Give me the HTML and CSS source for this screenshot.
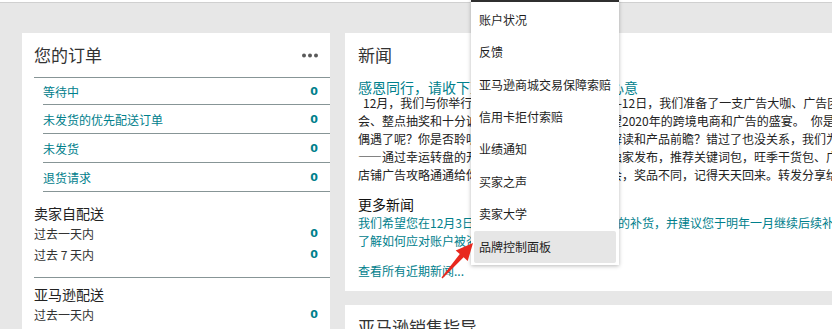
FILE: index.html
```html
<!DOCTYPE html>
<html lang="zh-CN">
<head>
<meta charset="utf-8">
<title>卖家平台</title>
<link rel="stylesheet" href="styles.css">
</head>
<body>
<div class="page">
  <div class="layout">
    <section class="card orders">
      <div class="card-head">
        <h2 class="card-title">您的订单</h2>
        <svg class="more" width="16" height="5" viewBox="0 0 16 5" aria-hidden="true"><circle cx="2" cy="2.5" r="2"/><circle cx="8" cy="2.5" r="2"/><circle cx="14" cy="2.5" r="2"/></svg>
      </div>
      <ul class="order-list">
        <li class="order-row"><a class="link">等待中</a><span class="count">0</span></li>
        <li class="order-row"><a class="link">未发货的优先配送订单</a><span class="count">0</span></li>
        <li class="order-row"><a class="link">未发货</a><span class="count">0</span></li>
        <li class="order-row"><a class="link">退货请求</a><span class="count">0</span></li>
      </ul>
      <div class="group group-first">
        <h3 class="group-title">卖家自配送</h3>
        <div class="stat-row"><span>过去一天内</span><span class="count">0</span></div>
        <div class="stat-row"><span>过去 7 天内</span><span class="count">0</span></div>
      </div>
      <div class="group group-next">
        <h3 class="group-title">亚马逊配送</h3>
        <div class="stat-row"><span>过去一天内</span><span class="count">0</span></div>
        <div class="stat-row"><span>过去 7 天内</span><span class="count">0</span></div>
      </div>
    </section>
    <div class="main-col">
      <section class="card news">
        <div class="card-head">
          <h2 class="card-title">新闻</h2>
        </div>
        <a class="link headline">感恩同行，请收下亚马逊广告给您的这份心意</a>
        <p class="news-body">12月，我们与你举行了亚马逊广告年度盛会，11-12日，我们准备了一支广告大咖、广告团队的豪华阵容<br>会、整点抽奖和十分诚意的礼品，让我们一起展望2020年的跨境电商和广告的盛宴。　你是否与他们<br>偶遇了呢？你是否聆听了大咖的广告策略分享、解读和产品前瞻？错过了也没关系，我们为你准备了<br>——通过幸运转盘的开奖，你解锁了亚马逊广告独家发布，推荐关键词包，旺季干货包、广告手册<br>店铺广告攻略通通给你。每天登录都会有抽奖机会，奖品不同，记得天天回来。转发分享给好友</p>
        <h3 class="more-title">更多新闻</h3>
        <a class="link news-link">我们希望您在12月3日之前完成年末旺季热销商品的补货，并建议您于明年一月继续后续补货</a>
        <a class="link news-link">了解如何应对账户被盗用的风险</a>
        <a class="link all-news">查看所有近期新闻...</a>
      </section>
      <section class="card guide">
        <div class="card-head">
          <h2 class="card-title">亚马逊销售指导</h2>
        </div>
      </section>
    </div>
  </div>
</div>

<ul class="dropdown">
  <li class="menu-item">账户状况</li>
  <li class="menu-item">反馈</li>
  <li class="menu-item">亚马逊商城交易保障索赔</li>
  <li class="menu-item">信用卡拒付索赔</li>
  <li class="menu-item">业绩通知</li>
  <li class="menu-item">买家之声</li>
  <li class="menu-item">卖家大学</li>
  <li class="menu-item menu-item-active">品牌控制面板</li>
</ul>

<svg class="arrow" width="50" height="50" viewBox="0 0 50 50" aria-hidden="true">
  <polygon points="11.5,42.5 29.8,19 25.7,15.4 43,8 37.7,26 33.6,22.3 12.5,43.5" fill="#e8281e"/>
</svg>
</body>
</html>
```
FILE: styles.css
```css
* { box-sizing: border-box; }
html, body { margin: 0; padding: 0; }
body {
  background: #fff;
  font-family: "Noto Sans CJK SC", "Liberation Sans", sans-serif;
  font-size: 12px;
  color: #222;
  position: relative;
  width: 840px;
  height: 329px;
  overflow: hidden;
}
h2, h3, p, ul { margin: 0; padding: 0; font-weight: normal; }
ul { list-style: none; }

.page {
  margin-top: 2px;
  border-top: 1px solid #d0d0d0;
  width: 832px;
  height: 327px;
  background: #e7e7e7;
  overflow: hidden;
}
.layout {
  display: grid;
  grid-template-columns: 308px 620px;
  column-gap: 15px;
  padding: 30px 0 0 22px;
  align-items: start;
}
.card { background: #fff; }
.card-head {
  display: flex;
  align-items: center;
  justify-content: space-between;
  padding-top: 10px;
  height: 34px;
}
.card-title {
  font-size: 17px;
  line-height: 24px;
  color: #333;
}
.more { fill: #5a5a5a; margin-right: 12px; }

.orders { padding-left: 12px; height: 400px; }
.orders .card-head { margin-bottom: 10px; }
.order-list { border-top: 1px solid #879596; }
.order-row {
  margin-left: 9px;
  height: 29px;
  padding-right: 12px;
  border-bottom: 1px solid #879596;
  display: flex;
  align-items: center;
  justify-content: space-between;
}
.order-row:first-child { height: 27px; }
.link { color: #00808c; text-decoration: none; }
.count {
  font-family: "DejaVu Sans", sans-serif;
  font-weight: bold;
  font-size: 11px;
  color: #00808c;
}
.group { border-bottom: 1px solid #879596; padding-bottom: 12px; }
.group-first { margin-top: 11px; }
.group-next { margin-top: 6px; }
.group-title { font-size: 14px; line-height: 20px; color: #222; }
.stat-row {
  height: 21px;
  padding-right: 12px;
  display: flex;
  align-items: center;
  justify-content: space-between;
  color: #333;
}

.main-col { display: flex; flex-direction: column; gap: 14px; }
.news { padding: 0 13px 11px; }
.headline {
  display: block;
  margin-top: 13px;
  font-size: 14px;
  line-height: 14px;
  white-space: nowrap;
}
.news-body {
  line-height: 18px;
  white-space: nowrap;
  text-indent: 5px;
  color: #222;
}
.more-title {
  margin-top: 10px;
  font-size: 14px;
  line-height: 20px;
  color: #111;
}
.news-link {
  display: block;
  line-height: 18px;
  white-space: nowrap;
}
.all-news {
  display: block;
  margin-top: 12px;
  line-height: 18px;
}
.guide { height: 60px; padding: 0 13px; }

.dropdown {
  position: absolute;
  top: 0;
  left: 471px;
  width: 148px;
  background: #fff;
  border-top: 2px solid #2f2f2f;
  padding: 1.8px 0 2px;
  box-shadow: 0 1px 4px rgba(0, 0, 0, 0.28);
}
.menu-item {
  height: 32.4px;
  line-height: 32.4px;
  padding-left: 8px;
  color: #1e1e1e;
  white-space: nowrap;
}
.menu-item-active {
  margin: 0 3px;
  padding-left: 5px;
  background: #e6e6e6;
  border-radius: 2px;
}
.arrow {
  position: absolute;
  left: 430px;
  top: 235px;
}
```
